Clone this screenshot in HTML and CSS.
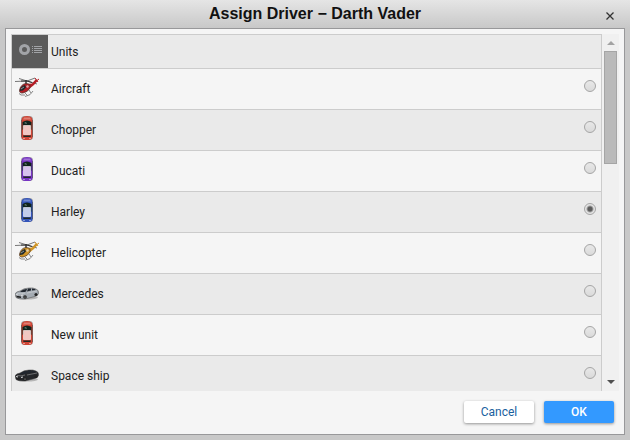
FILE: index.html
```html
<!DOCTYPE html>
<html lang="en">
<head>
<meta charset="utf-8">
<title>Assign Driver</title>
<link rel="stylesheet" href="styles.css">
</head>
<body>
<svg class="sprites" aria-hidden="true">
  <defs>
    <symbol id="car-top" viewBox="0 0 24 24">
      <rect x="6" y="0" width="12" height="24" rx="3.500" fill="#555" opacity=".5"/>
      <path d="M9 .5Q12-.4 15 .5Q17.500 1.300 17.500 4V21Q17.500 23.500 14 24H10Q6.500 23.500 6.500 21V4Q6.500 1.300 9 .5Z" fill="currentColor"/>
      <path d="M6.500 4v17M17.500 4v17" stroke="#222" opacity=".35"/>
      <path d="M9 1.500h6l1 2H8z" fill="#fff" opacity=".3"/>
      <path d="M7.500 6Q12 3 16.500 6V9.500h-9z" fill="#10231d"/>
      <path d="M9 7l2-1 1 2z" fill="#698778"/>
      <path d="M7.500 9l1 1v3l-1 1zM16.500 9l-1 1v3l1 1z" fill="#173b2e"/>
      <rect x="8" y="9" width="8" height="10" rx="1" fill="#fff" opacity=".7"/>
      <path d="M8 19.500h8l-.5 1.500h-7z" fill="#202924"/>
      <path d="M8 22.500h2M14 22.500h2" stroke="#fff" opacity=".45"/>
    </symbol>
    <symbol id="helicopter" viewBox="0 0 24 24">
      <path d="M0 6.500L12 6L22 9M4 3.500L12 6L20 3" stroke="#777" stroke-width="1" fill="none"/>
      <path d="M6 6l6 0 5 1.500" stroke="#333" stroke-width="1" fill="none"/>
      <path d="M11 5v4" stroke="#333" stroke-width="1.500"/>
      <path d="M12 9L17 8.500L21 4L22.500 6L19 10L14 14Z" fill="currentColor"/>
      <path d="M20 3l3 4M20 7l4-3" stroke="currentColor" stroke-width="1"/>
      <path d="M4.500 15Q6 9 11 8.500Q16 8.500 15 13Q13 17 8 18Q4 18.500 4.500 15Z" fill="currentColor" stroke="#4a3631" stroke-width=".7"/>
      <path d="M5 15Q6 11 10 10L11 12.500L8 15.500L5 16Z" fill="#20292c"/>
      <path d="M6 14l3-2" stroke="#89979b"/>
      <path d="M12 10l2 1-1 2-2-1z" fill="#eee" opacity=".65"/>
      <path d="M4 18.500l2 1.500 4 0M10 21.500q6-1 8-5.500M10 18l3 3M14 15l2 3" stroke="#888" fill="none"/>
    </symbol>
    <symbol id="sedan" viewBox="0 0 24 24">
      <ellipse cx="12" cy="17.500" rx="11" ry="2" fill="#777" opacity=".45"/>
      <path d="M0 14Q1 11.500 5 11Q9 8 14 8Q18 7.500 21 9Q24 10 23.500 13.500Q23 15.500 20 16.500L10 19Q4 19.500 1 17.500Z" fill="currentColor" stroke="#444" stroke-width=".5"/>
      <path d="M5 11.500Q9 8.500 12 9L11 11.500Q8 12.500 5 11.500ZM13 8.500h3v2l-4 1zM17 8.500q3 0 4 1.500l-4 .5z" fill="#20262e"/>
      <path d="M2 13.500q4 1 8-.5M12 13l10-2" stroke="#fff" opacity=".4" fill="none" stroke-width=".8"/>
      <path d="M1 15.500l5 1v1.500l-4-.5z" fill="#222"/>
      <circle cx="10" cy="17" r="1.800" fill="#222"/>
      <circle cx="21" cy="14.500" r="1.600" fill="#222"/>
      <path d="M1 14.500l2 .5M6 15.500l2-.5" stroke="#ddd"/>
      <circle cx="10" cy="17" r=".6" fill="#bbb"/>
    </symbol>
  </defs>
</svg>
<div class="dialog" role="dialog" aria-labelledby="title">
  <header class="titlebar">
    <h1 id="title">Assign Driver − Darth Vader</h1>
    <button class="close" type="button" aria-label="Close"><svg viewBox="0 0 8 8"><path d="M.5.5l7 7M7.500.5l-7 7" stroke="#333" stroke-width="1.300"/></svg></button>
  </header>
  <form class="panel">
    <div class="list">
      <div class="viewport">
        <table class="units">
          <thead>
            <tr><th class="kind"><svg viewBox="0 0 36 33" aria-hidden="true"><circle cx="12.500" cy="14.500" r="4" fill="none" stroke="#a2a4a8" stroke-width="3"/><path d="M20 11.500h1M20 13.500h1M20 15.500h1M20 17.500h1M22 11.500h8M22 13.500h8M22 15.500h8M22 17.500h8" stroke="#a2a4a8"/></svg></th><th class="name" colspan="2">Units</th></tr>
          </thead>
          <tbody>
            <tr><td class="icon"><svg class="red-heli"><use href="#helicopter"/></svg></td><td class="name"><label for="u1">Aircraft</label></td><td class="pick"><input type="radio" name="unit" id="u1"></td></tr>
            <tr><td class="icon"><svg class="red"><use href="#car-top"/></svg></td><td class="name"><label for="u2">Chopper</label></td><td class="pick"><input type="radio" name="unit" id="u2"></td></tr>
            <tr><td class="icon"><svg class="purple"><use href="#car-top"/></svg></td><td class="name"><label for="u3">Ducati</label></td><td class="pick"><input type="radio" name="unit" id="u3"></td></tr>
            <tr><td class="icon"><svg class="blue"><use href="#car-top"/></svg></td><td class="name"><label for="u4">Harley</label></td><td class="pick"><input type="radio" name="unit" id="u4" checked></td></tr>
            <tr><td class="icon"><svg class="yellow"><use href="#helicopter"/></svg></td><td class="name"><label for="u5">Helicopter</label></td><td class="pick"><input type="radio" name="unit" id="u5"></td></tr>
            <tr><td class="icon"><svg class="silver"><use href="#sedan"/></svg></td><td class="name"><label for="u6">Mercedes</label></td><td class="pick"><input type="radio" name="unit" id="u6"></td></tr>
            <tr><td class="icon"><svg class="red"><use href="#car-top"/></svg></td><td class="name"><label for="u7">New unit</label></td><td class="pick"><input type="radio" name="unit" id="u7"></td></tr>
            <tr><td class="icon"><svg class="black"><use href="#sedan"/></svg></td><td class="name"><label for="u8">Space ship</label></td><td class="pick"><input type="radio" name="unit" id="u8"></td></tr>
          </tbody>
        </table>
      </div>
      <div class="scrollbar" aria-hidden="true">
        <svg class="arrow" viewBox="0 0 17 17"><path d="M5 11l4-4 4 4z" fill="#a3a3a3"/></svg>
        <div class="track"><div class="thumb"></div></div>
        <svg class="arrow" viewBox="0 0 17 17"><path d="M5 6h8l-4 4z" fill="#505050"/></svg>
      </div>
    </div>
    <footer class="actions">
      <button type="button" class="button">Cancel</button>
      <button type="button" class="button primary">OK</button>
    </footer>
  </form>
</div>
</body>
</html>
```
FILE: styles.css
```css
* { box-sizing: border-box; }

body {
  margin: 0;
  color: #222;
  font: 12px/16px Roboto, "Liberation Sans", sans-serif;
}

.sprites { position: absolute; width: 0; height: 0; }

.dialog {
  display: flex;
  flex-direction: column;
  height: 100vh;
  padding: 0 5px 5px;
  background: #c8c8c8 linear-gradient(#e5e5e5, #c8c8c8) top / 100% 28px no-repeat;
}

.titlebar {
  display: grid;
  grid-template-columns: 20px 1fr 20px;
  align-items: center;
  height: 28px;
  flex: none;
}

.titlebar h1 {
  grid-column: 2;
  margin: 0;
  color: #111;
  font: bold 16px/28px "Liberation Sans", Arial, sans-serif;
  text-align: center;
}

.close {
  display: flex;
  padding: 3px 0 0 1px;
  border: 0;
  background: none;
}

.close svg { width: 8px; height: 8px; }

.panel {
  display: flex;
  flex-direction: column;
  flex: 1;
  min-height: 0;
  margin: 0;
  padding: 5px 5px 0;
  border: 1px solid #98989a;
  background: #f5f5f5;
}

.list {
  display: flex;
  flex: 1;
  min-height: 0;
}

.viewport { flex: 1; overflow: hidden; }

.units {
  width: 100%;
  border: 1px solid #ccc;
  border-spacing: 0;
  table-layout: fixed;
}

.units th, .units td {
  height: 41px;
  padding: 0;
  border-bottom: 1px solid #ccc;
  font-weight: normal;
  text-align: left;
}

.units th { height: 34px; background: #eaeaea; }
.units tbody tr:nth-child(even) { background: #eaeaea; }
.units .kind { width: 36px; background: #5b5b5b; }
.kind svg { display: block; width: 36px; height: 33px; }
.units .name { padding-left: 3px; }
.units .pick { width: 40px; padding: 11px 5px 0 0; text-align: right; vertical-align: top; }
.units .icon { padding: 6px 0 0 3px; vertical-align: top; }
.icon svg { display: block; width: 24px; height: 24px; }

.red { color: #d04535; }
.red-heli { color: #b51e25; }
.purple { color: #7734c4; }
.blue { color: #3354ba; }
.yellow { color: #cf9426; }
.silver { color: #a4abb2; }
.black { color: #25272a; }

input[type="radio"] {
  appearance: none;
  display: inline-block;
  width: 12px;
  height: 12px;
  margin: 0;
  border: 1px solid #a5a5a5;
  border-radius: 50%;
  background: linear-gradient(#e8e8e8, #dadada);
  vertical-align: top;
}

input[type="radio"]:checked {
  background: radial-gradient(circle, #5c5c5c 0 2px, #e4e4e4 4px);
}

.scrollbar {
  display: flex;
  flex-direction: column;
  width: 17px;
  background: #f0f0f0;
}

.arrow { display: block; width: 17px; height: 17px; }
.track { flex: 1; padding: 0 2px; }
.thumb { height: 35%; border: 1px solid #a5a5a5; background: #bababa; }

.actions {
  display: flex;
  justify-content: flex-end;
  gap: 10px;
  padding: 10px 5px 11px;
}

.button {
  width: 70px;
  height: 22px;
  padding: 0;
  border: 0;
  border-radius: 2px;
  background: #fff;
  box-shadow: 0 1px 3px rgba(0, 0, 0, .4);
  color: #1a5f9e;
  font: 12px/22px Roboto, "Liberation Sans", sans-serif;
}

.primary { background: #39f; color: #fff; font-weight: 500; }
```
